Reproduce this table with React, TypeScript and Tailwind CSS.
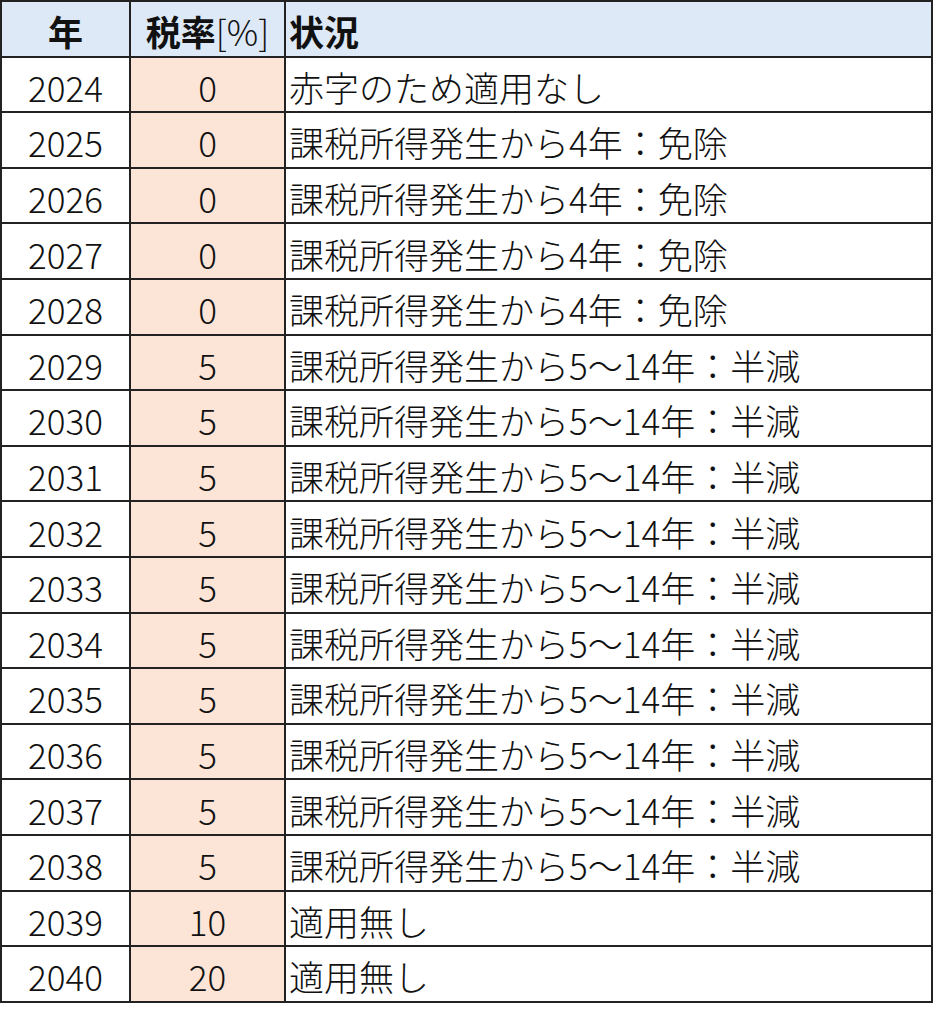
import React from "react";

const rows: [string, string, string][] = [
  ["2024", "0", "赤字のため適用なし"],
  ["2025", "0", "課税所得発生から4年：免除"],
  ["2026", "0", "課税所得発生から4年：免除"],
  ["2027", "0", "課税所得発生から4年：免除"],
  ["2028", "0", "課税所得発生から4年：免除"],
  ["2029", "5", "課税所得発生から5～14年：半減"],
  ["2030", "5", "課税所得発生から5～14年：半減"],
  ["2031", "5", "課税所得発生から5～14年：半減"],
  ["2032", "5", "課税所得発生から5～14年：半減"],
  ["2033", "5", "課税所得発生から5～14年：半減"],
  ["2034", "5", "課税所得発生から5～14年：半減"],
  ["2035", "5", "課税所得発生から5～14年：半減"],
  ["2036", "5", "課税所得発生から5～14年：半減"],
  ["2037", "5", "課税所得発生から5～14年：半減"],
  ["2038", "5", "課税所得発生から5～14年：半減"],
  ["2039", "10", "適用無し"],
  ["2040", "20", "適用無し"],
];

function Desc({ text }: { text: string }) {
  const parts = text.split("：");
  if (parts.length === 1) return <>{text}</>;
  return (
    <>
      {parts[0]}
      <span className="inline-block w-[1em] text-center">：</span>
      {parts[1]}
    </>
  );
}

export default function App() {
  return (
    <div
      className="bg-white w-[934px] h-[1024px] text-[#111] font-light"
      style={{ fontFamily: '"Noto Sans CJK JP", "Noto Sans", sans-serif' }}
    >
      <div className="w-[933px] border-l-2 border-t-2 border-[#222] grid grid-cols-[129px_155px_1fr]">
        <div className="h-[55.6px] border-r-2 border-b-2 border-[#222] bg-[#dde9f6] flex items-center justify-center text-[35px] font-bold leading-none pt-1">
          年
        </div>
        <div className="h-[55.6px] border-r-2 border-b-2 border-[#222] bg-[#dde9f6] flex items-center justify-center text-[35px] font-bold leading-none pt-1">
          税率<span className="font-light">[%]</span>
        </div>
        <div className="h-[55.6px] border-r-2 border-b-2 border-[#222] bg-[#dde9f6] flex items-center pl-[3px] text-[35px] font-bold leading-none pt-1">
          状況
        </div>
        {rows.map(([y, r, s]) => (
          <React.Fragment key={y}>
            <div className="h-[55.6px] border-r-2 border-b-2 border-[#222] flex items-center justify-center text-[35px] leading-none pt-1">
              {y}
            </div>
            <div className="h-[55.6px] border-r-2 border-b-2 border-[#222] bg-[#fce4d6] flex items-center justify-center text-[35px] leading-none pt-1">
              {r}
            </div>
            <div className="h-[55.6px] border-r-2 border-b-2 border-[#222] flex items-center pl-[3px] text-[35px] leading-none pt-1 whitespace-nowrap">
              <Desc text={s} />
            </div>
          </React.Fragment>
        ))}
      </div>
    </div>
  );
}
